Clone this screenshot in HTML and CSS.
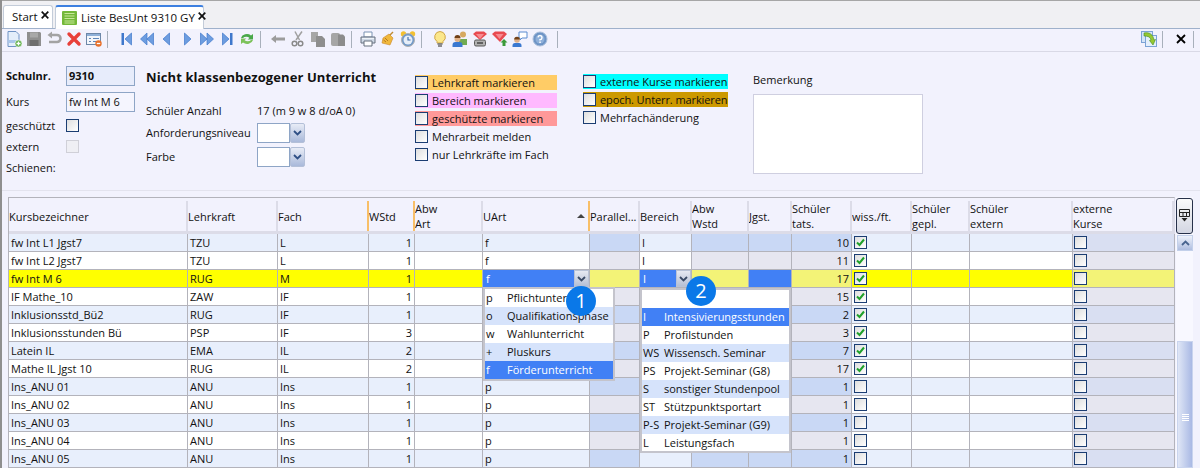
FILE: index.html
```html
<!DOCTYPE html>
<html lang="de">
<head>
<meta charset="utf-8">
<title>Liste BesUnt 9310 GY</title>
<link rel="stylesheet" href="styles.css">
</head>
<body>
<div class="tabs">
  <div class="tab"><span>Start</span><svg class="tabx" viewBox="0 0 8 8"><path d="M.7.700l6.600 6.600M7.300.700L.7 7.300" stroke="#111" stroke-width="1.700"/></svg></div>
  <div class="tab active">
    <svg class="tabicon" width="15" height="14" viewBox="0 0 15 14"><rect width="15" height="14" rx="1" fill="#74b83a"/><path d="M2.500 2.500h10M2.500 5h10M2.500 7.500h10M2.500 10h10M2.500 12h10" stroke="#c8e89a" stroke-width="1"/></svg>
    <span>Liste BesUnt 9310 GY</span><svg class="tabx" viewBox="0 0 8 8"><path d="M.7.700l6.600 6.600M7.300.700L.7 7.300" stroke="#111" stroke-width="1.700"/></svg>
  </div>
</div>

<div class="toolbar">
  <div class="tgroup g1">
    <svg class="ic" viewBox="0 0 16 16"><path d="M2 .5h8l3 3v12H2z" fill="#e4eefa" stroke="#6f93c4"/><path d="M2.500 9h10v3h-10z" fill="#a9c6ea"/><circle cx="12.500" cy="12.500" r="3.500" fill="#5fae4a" stroke="#fff" stroke-width=".6"/><path d="M12.500 10.500v4M10.500 12.500h4" stroke="#fff" stroke-width="1.300"/></svg>
    <svg class="ic" viewBox="0 0 16 16"><path d="M1 1h13l1 1v13H1z" fill="#8f8f8f"/><rect x="4" y="1.500" width="8" height="5" fill="#a8a8a8"/><rect x="3.500" y="9" width="9" height="6" fill="#6e6e6e"/></svg>
    <svg class="ic" viewBox="0 0 16 16"><path d="M5 4h6a3.500 3.500 0 0 1 0 7H3" fill="none" stroke="#a3a3a3" stroke-width="2.600"/><path d="M6 .5v7L1.500 4z" fill="#a3a3a3"/></svg>
    <svg class="ic" viewBox="0 0 16 16"><path d="M3 3l10 10M13 3L3 13" stroke="#e8403a" stroke-width="3.400" stroke-linecap="round"/></svg>
    <svg class="ic" viewBox="0 0 16 16"><rect x=".5" y="2.500" width="14" height="11" fill="#f3f6fb" stroke="#6d87a8"/><rect x="1" y="3" width="13" height="2" fill="#8fb0d8"/><path d="M3 7.500h2M7 7.500h6M3 10.500h2M7 10.500h3" stroke="#5f86b8"/><circle cx="12.500" cy="12.500" r="3.200" fill="#e8702a"/><path d="M10.800 12.500h3.400" stroke="#fff" stroke-width="1.300"/></svg>
  </div>
  <i class="tsep s1"></i>
  <div class="tgroup g2">
    <svg class="ic" viewBox="0 0 16 16"><rect x="2.500" y="2" width="2.500" height="12" fill="#3f78cc"/><path d="M12.500 2v12L6 8z" fill="#6d9de0" stroke="#3f78cc" stroke-width=".7"/></svg>
    <svg class="ic" viewBox="0 0 16 16"><path d="M8 2v12L1.500 8zM14.500 2v12L8 8z" fill="#6d9de0" stroke="#3f78cc" stroke-width=".7"/></svg>
    <svg class="ic" viewBox="0 0 16 16"><path d="M10.500 2v12L4 8z" fill="#6d9de0" stroke="#3f78cc" stroke-width=".7"/></svg>
    <svg class="ic" viewBox="0 0 16 16"><path d="M5.500 2v12L12 8z" fill="#6d9de0" stroke="#3f78cc" stroke-width=".7"/></svg>
    <svg class="ic" viewBox="0 0 16 16"><path d="M1.500 2v12L8 8zM8 2v12l6.500-6z" fill="#6d9de0" stroke="#3f78cc" stroke-width=".7"/></svg>
    <svg class="ic" viewBox="0 0 16 16"><rect x="11" y="2" width="2.500" height="12" fill="#3f78cc"/><path d="M3.500 2v12L10 8z" fill="#6d9de0" stroke="#3f78cc" stroke-width=".7"/></svg>
    <svg class="ic" viewBox="0 0 16 16"><path d="M2 7a6 5 0 0 1 10-2.500l2-1.500v5.500H8.500l2-1.500A4 3 0 0 0 4 7z" fill="#49a84a"/><path d="M14 9a6 5 0 0 1-10 2.500L2 13V7.500h5.500l-2 1.500a4 3 0 0 0 6.500 0z" fill="#7cc25a"/></svg>
  </div>
  <i class="tsep s2"></i>
  <div class="tgroup g3">
    <svg class="ic" viewBox="0 0 16 16"><path d="M1 8l5-4v2.500h9v3H6V12z" fill="#9c9c9c"/></svg>
    <svg class="ic" viewBox="0 0 16 16"><path d="M6 9L12 .5M9.500 9L5 .5" stroke="#a0a0a0" stroke-width="1.500" fill="none"/><circle cx="4.500" cy="12.500" r="2.300" fill="none" stroke="#8a8a8a" stroke-width="1.500"/><circle cx="10.500" cy="12.500" r="2.300" fill="none" stroke="#8a8a8a" stroke-width="1.500"/></svg>
    <svg class="ic" viewBox="0 0 16 16"><path d="M1 1h7v10H1z" fill="#a6a6a6"/><path d="M6 5h6l3 3v8H6z" fill="#8e8e8e"/></svg>
    <svg class="ic" viewBox="0 0 16 16"><rect x="1" y="2" width="9" height="13" rx="2" fill="#a6a6a6"/><path d="M8 3.500h5l2 2V15H8z" fill="#8c8c8c"/></svg>
  </div>
  <i class="tsep s3"></i>
  <div class="tgroup g4">
    <svg class="ic" viewBox="0 0 16 16"><path d="M4 1h8v5H4z" fill="#fff" stroke="#7b93b4"/><path d="M1 6h14v6H1z" fill="#cfd9e6" stroke="#66707f"/><path d="M4 10h8v5H4z" fill="#fff" stroke="#66707f"/><path d="M2 7.500h12" stroke="#eef3f8"/></svg>
    <svg class="ic" viewBox="0 0 16 16"><path d="M13 1L9 5" stroke="#c08a30" stroke-width="1.500"/><path d="M9 3l4 4-3 7-8-2 1-5z" fill="#f0b83c" stroke="#c9862a" stroke-width=".6"/><path d="M5 7l3 3M3.500 9l2.500 2" stroke="#b87820"/></svg>
    <svg class="ic" viewBox="0 0 16 16"><circle cx="3.500" cy="3" r="2.700" fill="#f3c030"/><circle cx="12.500" cy="3" r="2.700" fill="#f3c030"/><circle cx="8" cy="9" r="6.500" fill="#6e97c8" stroke="#b0b0b0"/><circle cx="8" cy="9" r="4.500" fill="#e6eef8"/><path d="M8 6v3h2.500" fill="none" stroke="#3a68a8" stroke-width="1.100"/></svg>
  </div>
  <i class="tsep s4"></i>
  <div class="tgroup g5">
    <svg class="ic" viewBox="0 0 16 16"><path d="M8 .5a5.500 5.500 0 0 1 3 10v1.500H5v-1.500A5.500 5.500 0 0 1 8 .5z" fill="#fbe78c" stroke="#d0a648"/><path d="M5.500 13h5M6 15h4" stroke="#6c6c6c" stroke-width="1.400"/></svg>
    <svg class="ic" viewBox="0 0 16 16"><circle cx="11" cy="3.500" r="3" fill="#d6a860"/><path d="M7 8h8v6H7z" fill="#71ab52"/><circle cx="5.500" cy="8" r="3" fill="#e0b088"/><path d="M2.500 7a3 3 0 0 1 6 0z" fill="#704018"/><path d="M.5 16v-2a3 3 0 0 1 3-3h4a3 3 0 0 1 3 3v2z" fill="#3a78d0"/></svg>
    <svg class="ic" viewBox="0 0 16 16"><path d="M1 3l3-2.500h8L15 3l-7 6z" fill="#e84a50"/><path d="M4 3h8L8 8z" fill="#f78a90"/><rect x="2.500" y="9" width="11" height="6" rx="1.500" fill="#b0b0b0" stroke="#5a5a5a"/><rect x="5" y="11" width="6" height="2" fill="#606060"/></svg>
    <svg class="ic" viewBox="0 0 16 16"><path d="M0 3l3-2.500h9L15 3l-7 8z" fill="#e84a50"/><path d="M3.500 3h8L7.500 8z" fill="#f78a90"/><path d="M12 8l3.500 3.500H13.500V15h-3v-3.500H8.500z" fill="#3a9a3a"/></svg>
    <svg class="ic" viewBox="0 0 16 16"><path d="M7 1h8v6h-5l-2 2V7H7z" fill="#fff" stroke="#5a8bd0"/><circle cx="5" cy="9" r="2.800" fill="#e0b088"/><path d="M2.200 8.500a2.800 2.800 0 0 1 5.600 0z" fill="#704018"/><path d="M.5 16v-1.500a2.500 2.500 0 0 1 2.500-2.500h4a2.500 2.500 0 0 1 2.500 2.500V16z" fill="#3a78d0"/></svg>
    <svg class="ic" viewBox="0 0 16 16"><circle cx="8" cy="8" r="7" fill="#6d94c6" stroke="#a9bedb"/><circle cx="8" cy="8" r="4.500" fill="#8fb0da"/><path d="M6 6.300a2 2 0 1 1 2 2.300v1" fill="none" stroke="#fff" stroke-width="1.400"/><rect x="7.300" y="10.500" width="1.500" height="1.500" fill="#fff"/></svg>
  </div>
  <i class="tsep s5"></i>
  <div class="tend">
    <svg class="ic" viewBox="0 0 16 16"><rect x=".5" y=".5" width="11" height="11" fill="#d4e4f8" stroke="#7ba3d6"/><rect x="4.500" y="4.500" width="11" height="11" fill="#e4effc" stroke="#7ba3d6"/><path d="M3 2c5-1 9 1 10 7l1.500-.5L12 14 8.500 9.500l1.500-.5C9.500 6 7 5 3 5z" fill="#96c832" stroke="#3f8a22" stroke-width=".6"/></svg>
    <i class="tsep"></i>
    <svg class="closex" viewBox="0 0 10 10"><path d="M1 1l8 8M9 1L1 9" stroke="#000" stroke-width="1.800"/></svg>
    <i class="tsep"></i>
  </div>
</div>

<div class="form">
  <div class="fa">
    <div class="farow big"><b class="lab">Schulnr.</b><span class="inp ro">9310</span></div>
    <div class="farow big"><span class="lab">Kurs</span><span class="inp">fw Int M 6</span></div>
    <div class="farow first"><span class="lab">geschützt</span><i class="cb"></i></div>
    <div class="farow"><span class="lab">extern</span><i class="cb dis"></i></div>
    <div class="farow"><span class="lab">Schienen:</span></div>
  </div>
  <div class="fb">
    <h1>Nicht klassenbezogener Unterricht</h1>
    <div class="fbrow count"><span class="lab2">Schüler Anzahl</span><span>17 (m 9 w 8 d/oA 0)</span></div>
    <div class="fbrow"><span class="lab2">Anforderungsniveau</span><span class="combo"></span><span class="cbtn"><svg width="9" height="6" viewBox="0 0 9 6"><path d="M1 1l3.500 3.500L8 1" fill="none" stroke="#2f4f85" stroke-width="1.800"/></svg></span></div>
    <div class="fbrow third"><span class="lab2">Farbe</span><span class="combo"></span><span class="cbtn"><svg width="9" height="6" viewBox="0 0 9 6"><path d="M1 1l3.500 3.500L8 1" fill="none" stroke="#2f4f85" stroke-width="1.800"/></svg></span></div>
  </div>
  <div class="fc">
    <div class="chk orange"><i class="cb"></i><span>Lehrkraft markieren</span></div>
    <div class="chk pink"><i class="cb"></i><span>Bereich markieren</span></div>
    <div class="chk red"><i class="cb"></i><span>geschützte markieren</span></div>
    <div class="chk"><i class="cb"></i><span>Mehrarbeit melden</span></div>
    <div class="chk"><i class="cb"></i><span>nur Lehrkräfte im Fach</span></div>
  </div>
  <div class="fd">
    <div class="chk cyan"><i class="cb"></i><span>externe Kurse markieren</span></div>
    <div class="chk gold"><i class="cb"></i><span>epoch. Unterr. markieren</span></div>
    <div class="chk"><i class="cb"></i><span>Mehrfachänderung</span></div>
  </div>
  <div class="fe">
    <div class="blabel">Bemerkung</div>
    <div class="area"></div>
  </div>
</div>

<div class="gridwrap">
  <table class="grid">
    <colgroup>
      <col class="c1"><col class="c2"><col class="c3"><col class="c4"><col class="c5"><col class="c6"><col class="c7"><col class="c8"><col class="c9"><col class="c10"><col class="c11"><col class="c12"><col class="c13"><col class="c14"><col class="c15">
    </colgroup>
    <thead>
      <tr>
        <th><div class="hd">Kursbezeichner</div></th>
        <th><div class="hd">Lehrkraft</div></th>
        <th><div class="hd mark">Fach</div></th>
        <th><div class="hd mark">WStd</div></th>
        <th><div class="hd">Abw<br>Art</div></th>
        <th><div class="hd mark sort"><span>UArt</span><svg width="8" height="4" viewBox="0 0 8 4"><path d="M0 4l4-4 4 4z" fill="#444"/></svg></div></th>
        <th><div class="hd">Parallel...</div></th>
        <th><div class="hd">Bereich</div></th>
        <th><div class="hd">Abw<br>Wstd</div></th>
        <th><div class="hd">Jgst.</div></th>
        <th><div class="hd">Schüler<br>tats.</div></th>
        <th><div class="hd">wiss./ft.</div></th>
        <th><div class="hd">Schüler<br>gepl.</div></th>
        <th><div class="hd">Schüler<br>extern</div></th>
        <th><div class="hd">externe<br>Kurse</div></th>
      </tr>
    </thead>
    <tbody>
      <tr class="odd"><td>fw Int L1 Jgst7</td><td>TZU</td><td>L</td><td class="n">1</td><td></td><td>f</td><td class="ro"></td><td>I</td><td class="ro"></td><td class="ro"></td><td class="ro n">10</td><td><i class="cb on"><svg viewBox="0 0 11 11"><path d="M2 5.500l2.500 2.500L9 2.500" fill="none" stroke="#1fa02a" stroke-width="2"/></svg></i></td><td></td><td></td><td class="xk"><i class="cb"></i></td></tr>
      <tr class="even"><td>fw Int L2 Jgst7</td><td>TZU</td><td>L</td><td class="n">1</td><td></td><td>f</td><td class="ro"></td><td>I</td><td class="ro"></td><td class="ro"></td><td class="ro n">11</td><td><i class="cb on"><svg viewBox="0 0 11 11"><path d="M2 5.500l2.500 2.500L9 2.500" fill="none" stroke="#1fa02a" stroke-width="2"/></svg></i></td><td></td><td></td><td class="xk"><i class="cb"></i></td></tr>
      <tr class="cur"><td>fw Int M 6</td><td>RUG</td><td>M</td><td class="n">1</td><td></td><td class="sel"><div class="edit"><span>f</span><span class="gbtn"><svg width="9" height="6" viewBox="0 0 9 6"><path d="M1 1l3.500 3.500L8 1" fill="none" stroke="#3a4a66" stroke-width="1.800"/></svg></span></div></td><td class="ro"></td><td class="sel"><div class="edit"><span>I</span><span class="gbtn"><svg width="9" height="6" viewBox="0 0 9 6"><path d="M1 1l3.500 3.500L8 1" fill="none" stroke="#3a4a66" stroke-width="1.800"/></svg></span></div></td><td class="ro"></td><td class="sel"></td><td class="ro n">17</td><td><i class="cb on"><svg viewBox="0 0 11 11"><path d="M2 5.500l2.500 2.500L9 2.500" fill="none" stroke="#1fa02a" stroke-width="2"/></svg></i></td><td></td><td></td><td class="xk"><i class="cb"></i></td></tr>
      <tr class="even"><td>IF Mathe_10</td><td>ZAW</td><td>IF</td><td class="n">1</td><td></td><td></td><td class="ro"></td><td></td><td class="ro"></td><td class="ro"></td><td class="ro n">15</td><td><i class="cb on"><svg viewBox="0 0 11 11"><path d="M2 5.500l2.500 2.500L9 2.500" fill="none" stroke="#1fa02a" stroke-width="2"/></svg></i></td><td></td><td></td><td class="xk"><i class="cb"></i></td></tr>
      <tr class="odd"><td>Inklusionsstd_Bü2</td><td>RUG</td><td>IF</td><td class="n">1</td><td></td><td></td><td class="ro"></td><td></td><td class="ro"></td><td class="ro"></td><td class="ro n">2</td><td><i class="cb on"><svg viewBox="0 0 11 11"><path d="M2 5.500l2.500 2.500L9 2.500" fill="none" stroke="#1fa02a" stroke-width="2"/></svg></i></td><td></td><td></td><td class="xk"><i class="cb"></i></td></tr>
      <tr class="even"><td>Inklusionsstunden Bü</td><td>PSP</td><td>IF</td><td class="n">3</td><td></td><td></td><td class="ro"></td><td></td><td class="ro"></td><td class="ro"></td><td class="ro n">3</td><td><i class="cb on"><svg viewBox="0 0 11 11"><path d="M2 5.500l2.500 2.500L9 2.500" fill="none" stroke="#1fa02a" stroke-width="2"/></svg></i></td><td></td><td></td><td class="xk"><i class="cb"></i></td></tr>
      <tr class="odd"><td>Latein IL</td><td>EMA</td><td>IL</td><td class="n">2</td><td></td><td></td><td class="ro"></td><td></td><td class="ro"></td><td class="ro"></td><td class="ro n">7</td><td><i class="cb on"><svg viewBox="0 0 11 11"><path d="M2 5.500l2.500 2.500L9 2.500" fill="none" stroke="#1fa02a" stroke-width="2"/></svg></i></td><td></td><td></td><td class="xk"><i class="cb"></i></td></tr>
      <tr class="even"><td>Mathe IL Jgst 10</td><td>RUG</td><td>IL</td><td class="n">2</td><td></td><td></td><td class="ro"></td><td></td><td class="ro"></td><td class="ro"></td><td class="ro n">17</td><td><i class="cb on"><svg viewBox="0 0 11 11"><path d="M2 5.500l2.500 2.500L9 2.500" fill="none" stroke="#1fa02a" stroke-width="2"/></svg></i></td><td></td><td></td><td class="xk"><i class="cb"></i></td></tr>
      <tr class="odd"><td>Ins_ANU 01</td><td>ANU</td><td>Ins</td><td class="n">1</td><td></td><td>p</td><td class="ro"></td><td></td><td class="ro"></td><td class="ro"></td><td class="ro n">1</td><td><i class="cb"></i></td><td></td><td></td><td class="xk"><i class="cb"></i></td></tr>
      <tr class="even"><td>Ins_ANU 02</td><td>ANU</td><td>Ins</td><td class="n">1</td><td></td><td>p</td><td class="ro"></td><td></td><td class="ro"></td><td class="ro"></td><td class="ro n">1</td><td><i class="cb"></i></td><td></td><td></td><td class="xk"><i class="cb"></i></td></tr>
      <tr class="odd"><td>Ins_ANU 03</td><td>ANU</td><td>Ins</td><td class="n">1</td><td></td><td>p</td><td class="ro"></td><td></td><td class="ro"></td><td class="ro"></td><td class="ro n">1</td><td><i class="cb"></i></td><td></td><td></td><td class="xk"><i class="cb"></i></td></tr>
      <tr class="even"><td>Ins_ANU 04</td><td>ANU</td><td>Ins</td><td class="n">1</td><td></td><td>p</td><td class="ro"></td><td></td><td class="ro"></td><td class="ro"></td><td class="ro n">1</td><td><i class="cb"></i></td><td></td><td></td><td class="xk"><i class="cb"></i></td></tr>
      <tr class="odd"><td>Ins_ANU 05</td><td>ANU</td><td>Ins</td><td class="n">1</td><td></td><td>p</td><td class="ro"></td><td></td><td class="ro"></td><td class="ro"></td><td class="ro n">1</td><td><i class="cb"></i></td><td></td><td></td><td class="xk"><i class="cb"></i></td></tr>
    </tbody>
  </table>
  <div class="vbar">
    <div class="chooser"><svg width="11" height="13" viewBox="0 0 11 13"><path d="M.5.500h10v7H.5zM.5 3.500h10M4 3.500v4M7.500 3.500v4" fill="none" stroke="#222"/><path d="M2.500 9h6l-3 3.500z" fill="#222"/></svg></div>
    <div class="upbtn"><svg width="9" height="6" viewBox="0 0 9 6"><path d="M1 5l3.500-3.500L8 5" fill="none" stroke="#47638f" stroke-width="1.800"/></svg></div>
    <div class="track"></div>
    <div class="thumb"><i></i><i></i><i></i><i></i></div>
  </div>

  <div class="pop pop1">
    <div class="pi"><span class="pk">p</span><span>Pflichtunterricht</span></div>
    <div class="pi alt"><span class="pk">o</span><span>Qualifikationsphase</span></div>
    <div class="pi"><span class="pk">w</span><span>Wahlunterricht</span></div>
    <div class="pi alt"><span class="pk">+</span><span>Pluskurs</span></div>
    <div class="pi hit"><span class="pk">f</span><span>Förderunterricht</span></div>
  </div>
  <div class="pop pop2">
    <div class="pi"></div>
    <div class="pi hit"><span class="pk">I</span><span>Intensivierungsstunden</span></div>
    <div class="pi"><span class="pk">P</span><span>Profilstunden</span></div>
    <div class="pi alt"><span class="pk">WS</span><span>Wissensch. Seminar</span></div>
    <div class="pi"><span class="pk">PS</span><span>Projekt-Seminar (G8)</span></div>
    <div class="pi alt"><span class="pk">S</span><span>sonstiger Stundenpool</span></div>
    <div class="pi"><span class="pk">ST</span><span>Stützpunktsportart</span></div>
    <div class="pi alt"><span class="pk">P-S</span><span>Projekt-Seminar (G9)</span></div>
    <div class="pi"><span class="pk">L</span><span>Leistungsfach</span></div>
  </div>
  <div class="badge b1">1</div>
  <div class="badge b2">2</div>
</div>
</body>
</html>
```
FILE: styles.css
```css
* { box-sizing: border-box; }
html, body { margin: 0; padding: 0; }
body {
  width: 1200px;
  height: 468px;
  overflow: hidden;
  background: #f2f2fd;
  border-left: 2px solid #8f8f8f;
  font-family: "Open Sans", "Noto Sans", "DejaVu Sans", sans-serif;
  font-size: 11px;
  line-height: 14px;
  color: #111;
  white-space: nowrap;
}

/* tabs */
.tabs {
  height: 29px;
  display: flex;
  align-items: flex-end;
  gap: 2px;
  padding-left: 1px;
  background: #f0f0f3;
  border-top: 1px solid #a6a6a6;
  border-bottom: 1px solid #9fb1cb;
}
.tab {
  height: 23px;
  width: 50px;
  display: flex;
  align-items: center;
  padding-left: 8px;
  font-size: 11.500px;
  background: #fff;
  border: 1px solid #c3ccd9;
  border-bottom: 0;
  border-radius: 3px 3px 0 0;
}
.tab.active {
  width: 149px;
  padding-left: 6px;
  margin-bottom: -1px;
  height: 24px;
  border-top: 2px solid #3c7fe0;
}
.tabicon { margin-right: 4px; flex: none; }
.tabx { width: 8px; height: 8px; margin-left: 3px; margin-top: -4px; flex: none; }

/* toolbar */
.toolbar {
  height: 23px;
  display: flex;
  align-items: center;
  padding: 0 0 2px 4px;
  border-bottom: 1px solid #d9d9e6;
}
.tgroup { display: flex; gap: 4px; }
.ic { width: 16px; height: 16px; flex: none; }
.tsep { display: block; width: 1px; height: 17px; background: #a8b0bb; flex: none; }
.s1 { margin: 0 11px 0 5px; }
.s2 { margin: 0 9px 0 5px; }
.s3 { margin: 0 8px 0 5px; }
.s4 { margin: 0 10px 0 5px; }
.s5 { margin: 0 0 0 9px; }
.tend { margin-left: auto; display: flex; align-items: center; padding-right: 6px; }
.tend .tsep { margin-left: 5px; }
.closex { width: 10px; height: 10px; margin-left: 13px; margin-right: 2px; }

/* form */
.form {
  height: 139px;
  display: flex;
  align-items: flex-start;
  border-bottom: 1px solid #e3e3ee;
}
.fa { width: 129px; margin: 14px 0 0 4px; }
.farow { display: flex; align-items: center; height: 21px; }
.farow.big { height: 20px; margin-bottom: 6px; }
.farow.first { margin-top: -3px; }
.lab { width: 60px; flex: none; }
.inp {
  width: 69px;
  height: 20px;
  border: 1px solid #8ea5c6;
  background: #f5f5fe;
  padding: 2px 2px 0 2px;
}
.inp.ro { background: #e7ecfb; font-weight: 700; }
.cb {
  display: block;
  width: 13px;
  height: 13px;
  border: 1px solid #1b3d72;
  background: linear-gradient(135deg, #dedede, #fff);
  flex: none;
}
.cb.dis { border-color: #d0d0d8; background: #efeff4; }
.cb svg { display: block; width: 11px; height: 11px; }
.fb { width: 269px; margin: 14px 0 0 11px; }
h1 { margin: 0 0 16px; font-size: 13px; line-height: 22px; font-weight: 700; color: #111; letter-spacing: .1px; }
.fbrow { display: flex; align-items: center; height: 20px; margin-bottom: 2px; }
.fbrow.third { margin-top: 4px; }
.fbrow.count { margin-top: -3px; }
.lab2 { width: 111px; flex: none; }
.combo { width: 33px; height: 20px; background: #fff; border: 1px solid #8ea5c6; }
.cbtn {
  width: 15px;
  height: 20px;
  border: 1px solid #b4c0d8;
  border-radius: 2px;
  background: linear-gradient(#e8ecf6, #a9b9da);
  display: flex;
  align-items: center;
  justify-content: center;
}
.fc { width: 142px; margin: 23px 0 0 0; display: flex; flex-direction: column; gap: 3px; }
.fd { width: 145px; margin: 22px 0 0 26px; display: flex; flex-direction: column; gap: 3px; }
.chk { display: flex; align-items: center; height: 15px; }
.chk .cb { margin-right: 4px; }
.orange { background: #ffcc66; }
.pink { background: #ffb9ff; }
.red { background: #ff9999; }
.cyan { background: #00ffff; }
.gold { background: #cc9900; letter-spacing: -.1px; }
.fe { width: 170px; margin: 21px 0 0 25px; }
.blabel { height: 14px; margin-bottom: 7px; }
.area { height: 80px; background: #fff; border: 1px solid #cfcfe0; }

/* grid */
.gridwrap {
  position: relative;
  display: flex;
  align-items: flex-start;
  margin: 6px 0 0 6px;
  width: 1184px;
}
.grid {
  table-layout: fixed;
  width: 1167px;
  flex: none;
  border-collapse: separate;
  border-spacing: 0;
  border-left: 1px solid #b3b3bb;
}
.c1 { width: 179px; } .c2 { width: 90px; } .c3 { width: 91px; } .c4 { width: 46px; }
.c5 { width: 68px; } .c6 { width: 107px; } .c7 { width: 50px; } .c8 { width: 52px; }
.c9 { width: 57px; } .c10 { width: 43px; } .c11 { width: 60px; } .c12 { width: 60px; }
.c13 { width: 58px; } .c14 { width: 103px; } .c15 { width: 102px; }
th {
  height: 37px;
  padding: 3px 0 0;
  font-weight: 400;
  text-align: left;
  border-top: 1px solid #b3b3bb;
  border-bottom: 3px solid #dcdce8;
  vertical-align: top;
}
th:last-child { border-right: 1px solid #dcdce8; }
.hd {
  height: 30px;
  padding-left: 0;
  display: flex;
  align-items: center;
  border-right: 2px solid #dcdce8;
  line-height: 15px;
  overflow: hidden;
}
.hd.mark { border-right-color: #f8bf68; }
.sort { justify-content: space-between; padding-right: 3px; }
td {
  height: 18px;
  padding: 0 0 0 2px;
  border-right: 1px solid #b3b3bb;
  border-bottom: 1px solid #b3b3bb;
  overflow: hidden;
}
td.n { text-align: right; padding: 0 2px 0 0; }
.odd td { background: #e8effc; }
.even td { background: #fff; }
.odd td.ro { background: #c9d8f5; }
.even td.ro { background: #e6e6f0; }
.odd td.xk { background: #d9dff2; }
.even td.xk { background: #e6e6f0; }
.cur td { background: #ffff00; }
.cur td.ro, .cur td.xk { background: #f3f377; }
.cur td.sel { background: #4180f5; color: #fff; padding: 0; }
.edit { display: flex; justify-content: space-between; align-items: center; height: 17px; padding-left: 3px; }
.gbtn {
  width: 15px;
  height: 17px;
  border: 1px solid #b9c2d6;
  background: linear-gradient(#e6e9f2, #b6bfd4);
  display: flex;
  align-items: center;
  justify-content: center;
}
td.xk { padding-left: 1px; }

/* vertical bar */
.vbar { width: 17px; height: 271px; display: flex; flex-direction: column; margin-left: 1px; background: #f8f8ff; }
.chooser {
  width: 17px;
  height: 36px;
  margin: 1px 0 0 0;
  border: 1px solid #27314a;
  border-radius: 3px;
  background: linear-gradient(#fafafa, #d3d6e2);
  display: flex;
  align-items: center;
  justify-content: center;
}
.upbtn {
  width: 16px;
  height: 16px;
  margin: 1px 0 0 1px;
  border: 1px solid #c3d0ea;
  background: linear-gradient(#eef2fb, #aebde0);
  display: flex;
  align-items: center;
  justify-content: center;
}
.track { height: 91px; }
.thumb {
  width: 16px;
  height: 127px;
  margin-left: 1px;
  border: 1px solid #c9d4ee;
  background: linear-gradient(90deg, #dfe6f6, #a9b9e4);
  display: flex;
  flex-direction: column;
  align-items: center;
  gap: 1px;
  padding-top: 72px;
}
.thumb i { display: block; width: 7px; height: 1px; background: #fff; }

/* dropdowns */
.pop { position: absolute; background: #fff; border: 2px solid #c4c4cc; font-size: 11px; }
.pop1 { left: 475px; top: 90px; width: 132px; height: 94px; }
.pop2 { left: 632px; top: 91px; width: 151px; height: 165px; }
.pi { display: flex; align-items: center; height: 18px; padding-left: 1px; }
.pk { width: 21px; flex: none; }
.alt { background: #d6e3fb; }
.hit { background: #4180f5; color: #fff; }
.badge {
  position: absolute;
  width: 30px;
  height: 30px;
  border-radius: 50%;
  background: #0a78e8;
  color: #fff;
  font-size: 20px;
  line-height: 30px;
  text-align: center;
}
.b1 { left: 558px; top: 89px; }
.b2 { left: 678px; top: 79px; }
```
